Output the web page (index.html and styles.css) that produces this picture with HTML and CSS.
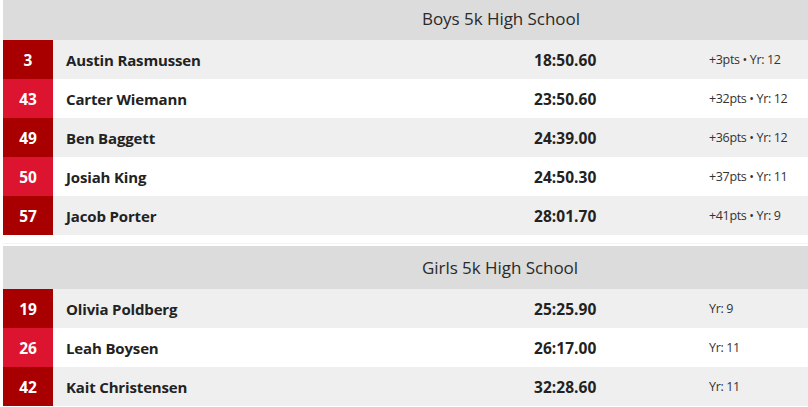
FILE: index.html
```html
<!DOCTYPE html>
<html>
<head>
<meta charset="utf-8">
<link rel="stylesheet" href="styles.css">
</head>
<body>
<div class="results">
  <section class="event">
    <div class="event-title">Boys 5k High School</div>
    <div class="row odd"><div class="place dark">3</div><div class="name">Austin Rasmussen</div><div class="time">18:50.60</div><div class="extra">+3pts • Yr: 12</div></div>
    <div class="row even"><div class="place bright">43</div><div class="name">Carter Wiemann</div><div class="time">23:50.60</div><div class="extra">+32pts • Yr: 12</div></div>
    <div class="row odd"><div class="place dark">49</div><div class="name">Ben Baggett</div><div class="time">24:39.00</div><div class="extra">+36pts • Yr: 12</div></div>
    <div class="row even"><div class="place bright">50</div><div class="name">Josiah King</div><div class="time">24:50.30</div><div class="extra">+37pts • Yr: 11</div></div>
    <div class="row odd"><div class="place dark">57</div><div class="name">Jacob Porter</div><div class="time">28:01.70</div><div class="extra">+41pts • Yr: 9</div></div>
  </section>
  <section class="event">
    <div class="event-title">Girls 5k High School</div>
    <div class="row odd"><div class="place dark">19</div><div class="name">Olivia Poldberg</div><div class="time">25:25.90</div><div class="extra">Yr: 9</div></div>
    <div class="row even"><div class="place bright">26</div><div class="name">Leah Boysen</div><div class="time">26:17.00</div><div class="extra">Yr: 11</div></div>
    <div class="row odd"><div class="place dark">42</div><div class="name">Kait Christensen</div><div class="time">32:28.60</div><div class="extra">Yr: 11</div></div>
  </section>
</div>
</body>
</html>
```
FILE: styles.css
```css
html, body {
  margin: 0;
  padding: 0;
  background: #ffffff;
  overflow: hidden;
}
body {
  font-family: "Open Sans", "Noto Sans", sans-serif;
  color: #222222;
}
.results {
  margin-top: -3px;
  padding-left: 3px;
}
.event {
  padding-bottom: 8px;
  border-bottom: 1px solid #f3f3f3;
  margin-bottom: 2px;
}
.event-title {
  height: 43px;
  background: #dcdcdc;
  display: flex;
  align-items: center;
  padding-left: 419px;
  font-size: 17px;
  color: #2a2a2a;
  letter-spacing: -0.05px;
}
.row {
  display: grid;
  grid-template-columns: 50px 1fr 175px 99px;
  height: 39px;
  align-items: center;
}
.row.odd { background: #efefef; }
.row.even { background: #ffffff; }
.place {
  height: 100%;
  display: flex;
  align-items: center;
  justify-content: center;
  color: #ffffff;
  font-weight: 700;
  font-size: 15.5px;
}
.place.dark { background: #a80000; }
.place.bright { background: #dc1430; }
.name {
  padding-left: 13px;
  font-weight: 700;
  font-size: 15px;
  letter-spacing: -0.15px;
}
.time {
  font-weight: 700;
  font-size: 15.5px;
  letter-spacing: 0.05px;
}
.extra {
  font-size: 12.5px;
  color: #333333;
  letter-spacing: -0.35px;
}
```
